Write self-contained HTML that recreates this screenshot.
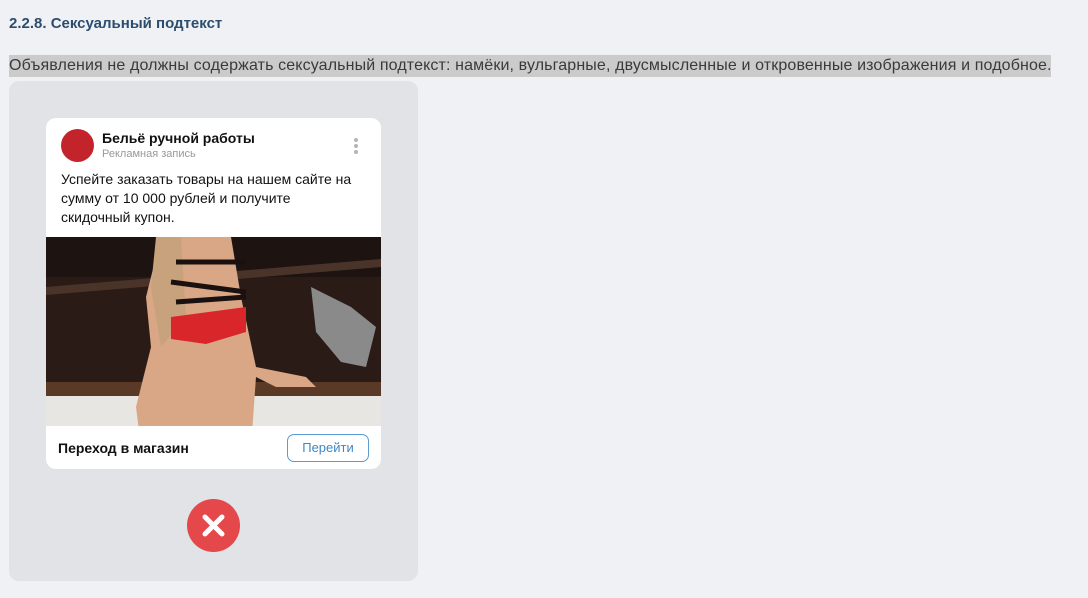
<!DOCTYPE html><html><head><meta charset="utf-8"><style>
body{margin:0;width:1088px;height:598px;background:#f0f1f4;font-family:"Liberation Sans",Arial,sans-serif;position:relative;overflow:hidden}
.h{position:absolute;left:9px;top:15px;font-size:15px;font-weight:bold;color:#2c4d6e}
.p{position:absolute;left:9px;top:55px;height:22px;line-height:22px;width:1042px;background:#cbcbcb;font-size:16px;letter-spacing:0.13px;color:#3a3a3a;white-space:nowrap}
.panel{position:absolute;left:9px;top:81px;width:409px;height:500px;background:#e2e3e6;border-radius:10px}
.card{position:absolute;left:46px;top:118px;width:335px;height:351px;background:#fff;border-radius:10px;overflow:hidden}
.av{position:absolute;left:15px;top:11px;width:33px;height:33px;border-radius:50%;background:#c3242c}
.t1{position:absolute;left:56px;top:12px;font-size:14px;font-weight:bold;color:#111}
.t2{position:absolute;left:56px;top:30px;font-size:11px;color:#999}
.dots{position:absolute;left:308px;top:20px;width:4px}
.dots i{display:block;width:4px;height:4px;border-radius:50%;background:#b5b5b5;margin-bottom:2px}
.txt{position:absolute;left:15px;top:52px;font-size:14px;line-height:19px;color:#111;width:302px}
.img{position:absolute;left:0;top:119px;width:335px;height:189px;overflow:hidden;background:#2a1a16}
.bt{position:absolute;left:12px;top:322px;font-size:14px;font-weight:bold;color:#111}
.btn{position:absolute;left:241px;top:316px;width:80px;height:26px;border:1px solid #5a9bd5;border-radius:7px;color:#3f86c8;font-size:13px;text-align:center;line-height:26px}
.x{position:absolute;left:187px;top:499px;width:53px;height:53px;border-radius:50%;background:#e5484b}
</style></head><body>
<div class="h">2.2.8. Сексуальный подтекст</div>
<div class="p">Объявления не должны содержать сексуальный подтекст: намёки, вульгарные, двусмысленные и откровенные изображения и подобное.</div>
<div class="panel"></div>
<div class="card">
<div class="av"></div><div class="t1">Бельё ручной работы</div><div class="t2">Рекламная запись</div>
<div class="dots"><i></i><i></i><i></i></div>
<div class="txt">Успейте заказать товары на нашем сайте на сумму от 10 000 рублей и получите<br>скидочный купон.</div>
<div class="img"><svg width="335" height="189">
<rect width="335" height="189" fill="#2b1b17"/>
<rect x="0" y="0" width="335" height="40" fill="#1d1412"/>
<polygon points="0,50 335,22 335,30 0,58" fill="#4a3328"/>
<rect x="0" y="145" width="335" height="14" fill="#5a3a26"/>
<rect x="0" y="159" width="335" height="30" fill="#e8e6e3"/>
<path d="M265,50 l40,20 l25,20 l-10,40 l-25,-5 l-25,-30 z" fill="#8a8a8a"/>
<path d="M115,0 l70,0 l10,60 l15,70 l50,10 l10,10 l-40,0 l-20,-10 l-5,70 l-110,0 l-5,-40 l15,-60 l-5,-50 z" fill="#d9a686"/>
<path d="M110,0 l25,0 l5,80 l-25,30 l-10,-60 z" fill="#c8a27c"/>
<path d="M125,80 l75,-10 l0,25 l-40,12 l-35,-5 z" fill="#d8262a"/>
<path d="M130,25 l70,0 M125,45 l75,10 M130,65 l70,-5" stroke="#1a1010" stroke-width="5"/>
</svg></div>
<div class="bt">Переход в магазин</div><div class="btn">Перейти</div>
</div>
<div class="x"><svg width="53" height="53"><path d="M18,18 L35,35 M35,18 L18,35" stroke="#fff" stroke-width="5" stroke-linecap="round"/></svg></div>
</body></html>
